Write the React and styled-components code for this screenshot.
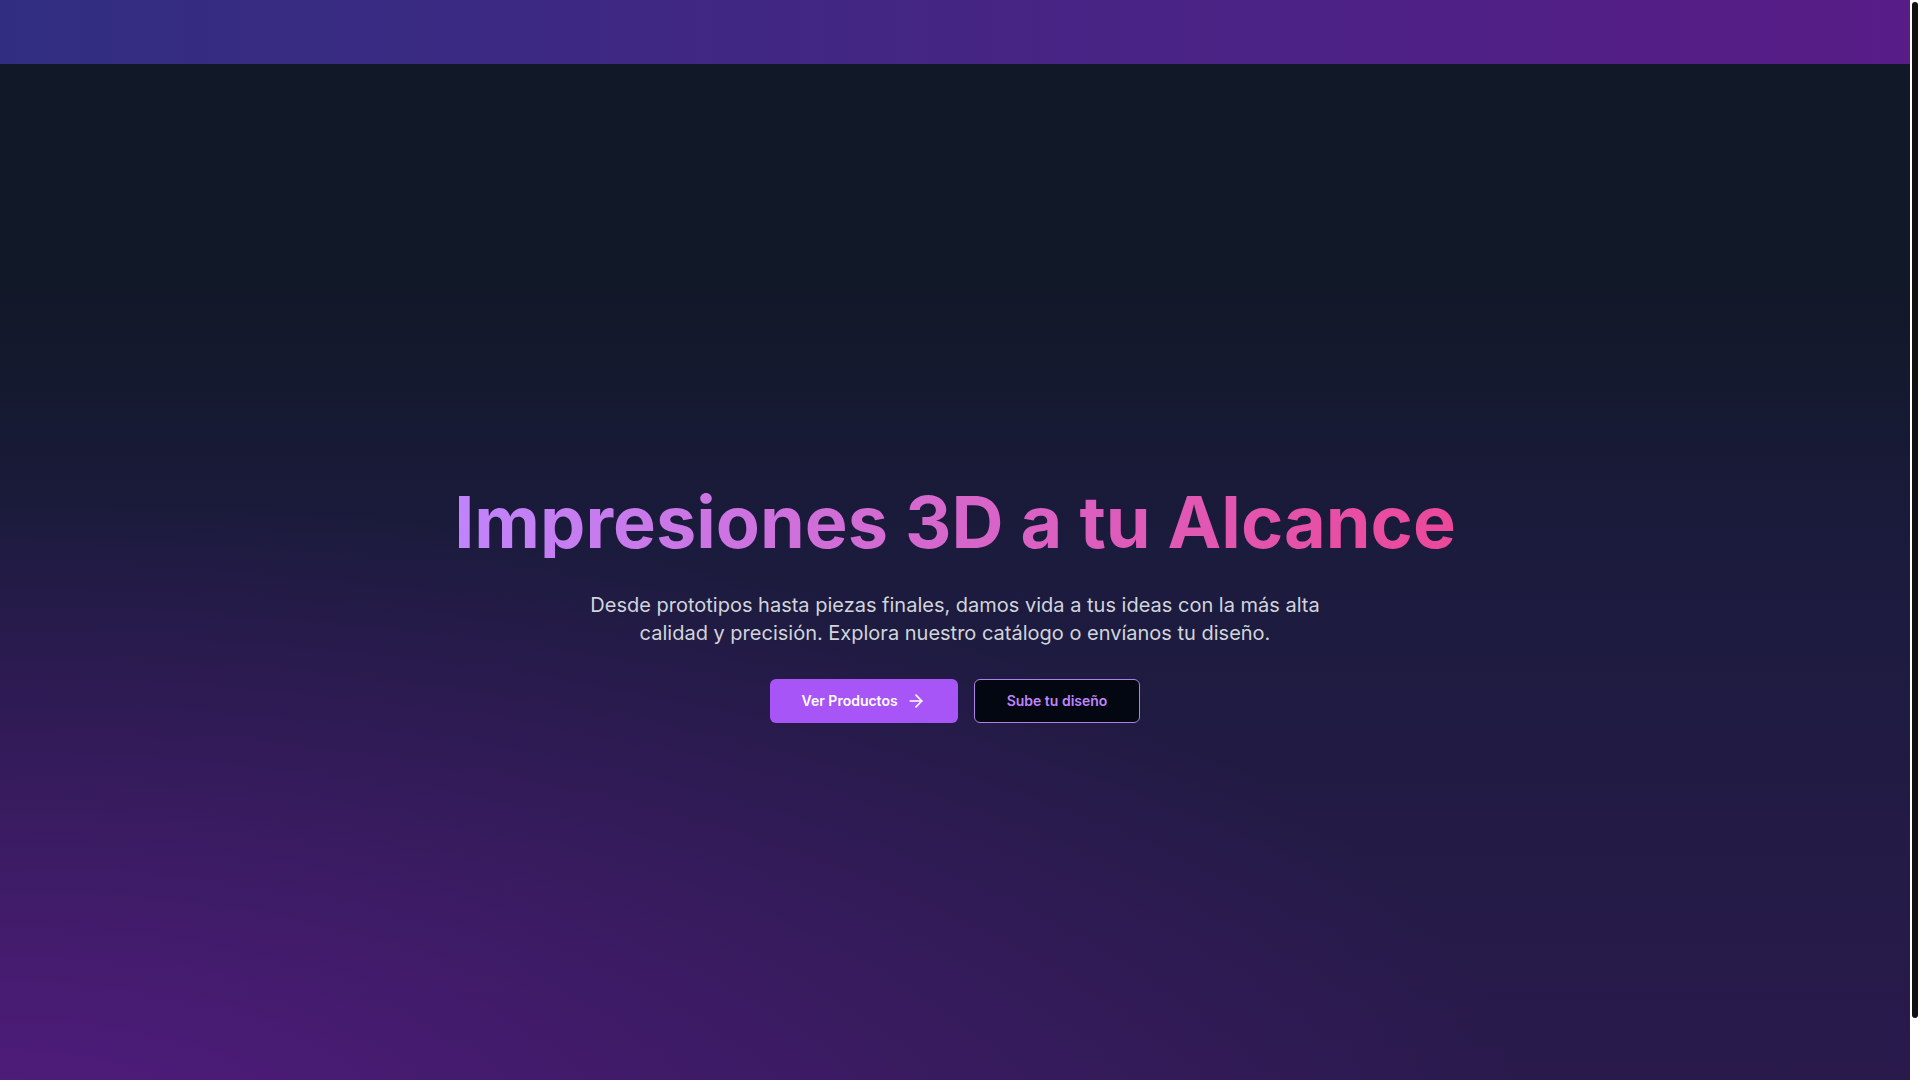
import React from "react";
import styled, { createGlobalStyle } from "styled-components";
import { ArrowRight } from "lucide-react";

const GlobalStyle = createGlobalStyle`
  * {
    box-sizing: border-box;
  }

  html, body {
    margin: 0;
    padding: 0;
    height: 100%;
    overflow: hidden;
    background: #111827;
    font-family: "Inter", "Noto Sans", "Liberation Sans", sans-serif;
  }
`;

const App = () => {
  return (
    <Page>
      <GlobalStyle />
      <Main>
        <Header>
          <Nav />
        </Header>
        <Hero>
          <Content>
            <Title>Impresiones 3D a tu Alcance</Title>
            <Lead>
              Desde prototipos hasta piezas finales, damos vida a tus ideas con
              la más alta calidad y precisión. Explora nuestro catálogo o
              envíanos tu diseño.
            </Lead>
            <Actions>
              <PrimaryButton>
                Ver Productos
                <ArrowRight size={20} strokeWidth={2} />
              </PrimaryButton>
              <OutlineButton>Sube tu diseño</OutlineButton>
            </Actions>
          </Content>
        </Hero>
      </Main>
      <ScrollTrack>
        <ScrollThumb />
      </ScrollTrack>
    </Page>
  );
};

// Styled Components
const Page = styled.div`
  display: flex;
  height: 100vh;
`;

const Main = styled.div`
  flex: 1;
  min-width: 0;
  overflow-y: auto;
  scrollbar-width: none;

  &::-webkit-scrollbar {
    display: none;
  }
`;

const ScrollTrack = styled.div`
  width: 10px;
  flex-shrink: 0;
  padding: 2px 2px 0;
  background: #ffffff;
`;

const ScrollThumb = styled.div`
  height: 1016px;
  border-radius: 3px;
  background: #111111;
`;

const Header = styled.header`
  height: 64px;
  background: linear-gradient(to right, #312e81, #581c87);
`;

const Nav = styled.nav`
  max-width: 1280px;
  height: 100%;
  margin: 0 auto;
  padding: 0 16px;
  display: flex;
  align-items: center;
  justify-content: space-between;
`;

const Hero = styled.section`
  min-height: 100vh;
  display: flex;
  align-items: center;
  justify-content: center;
  padding: 0 16px;
  background:
    radial-gradient(
      ellipse 80% 60% at 0% 100%,
      rgba(88, 28, 135, 0.85) 0%,
      rgba(88, 28, 135, 0) 100%
    ),
    linear-gradient(
      to bottom,
      #111827 0%,
      #111827 20%,
      #1b1b3d 45%,
      #2b1a4e 100%
    );
`;

const Content = styled.div`
  max-width: 1280px;
  width: 100%;
  text-align: center;
`;

const Title = styled.h1`
  display: inline-block;
  margin: 0 0 33px;
  font-size: 72px;
  line-height: 1;
  font-weight: 700;
  background: linear-gradient(to right, #c084fc, #ec4899);
  -webkit-background-clip: text;
  background-clip: text;
  color: transparent;
`;

const Lead = styled.p`
  max-width: 768px;
  margin: 0 auto 32px;
  font-size: 20px;
  line-height: 28px;
  color: #d1d5db;
`;

const Actions = styled.div`
  display: flex;
  justify-content: center;
  gap: 16px;
`;

const BaseButton = styled.button`
  display: inline-flex;
  align-items: center;
  justify-content: center;
  gap: 8px;
  height: 44px;
  padding: 0 32px;
  border-radius: 6px;
  font-family: inherit;
  font-size: 14px;
  line-height: 20px;
  font-weight: 600;
  cursor: pointer;
`;

const PrimaryButton = styled(BaseButton)`
  border: none;
  background: #a855f7;
  color: #ffffff;
`;

const OutlineButton = styled(BaseButton)`
  border: 1px solid #b07fe8;
  background: #030712;
  color: #c084fc;
`;

export default App;
